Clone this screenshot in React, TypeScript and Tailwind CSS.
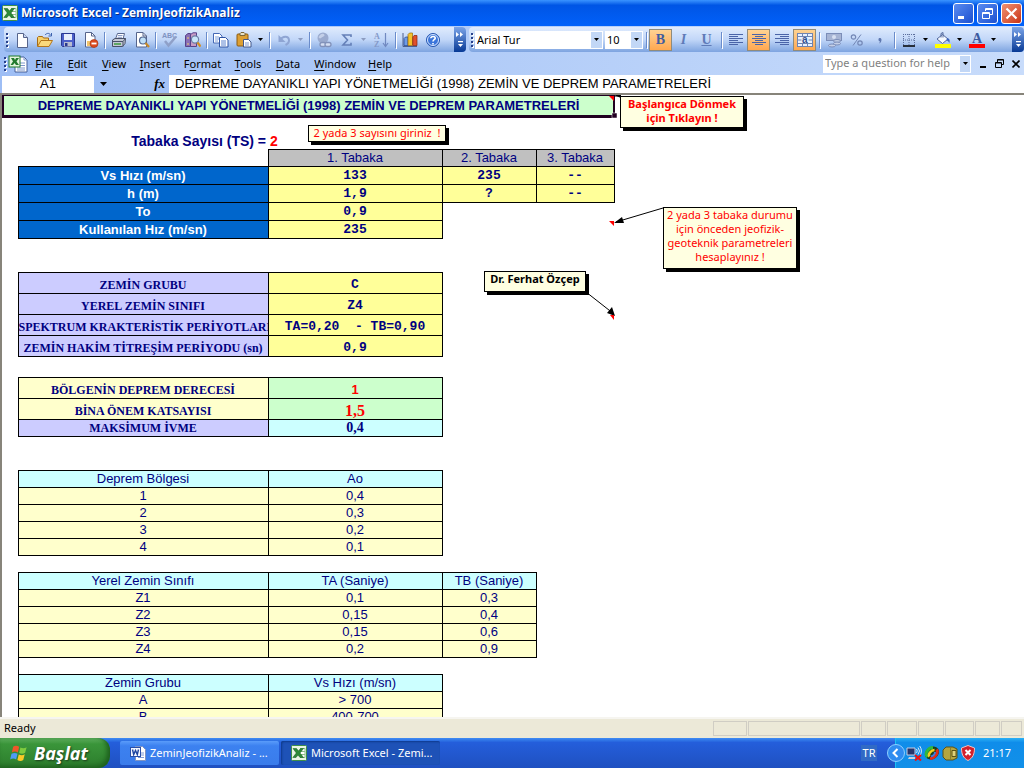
import type { ReactNode } from 'react';

const UI = 'font-["Noto_Sans",sans-serif]';

/* ---------- small drawings ---------- */

function Svg({ children, size = 16 }: { children: ReactNode; size?: number }) {
  return (
    <svg width={size} height={size} viewBox="0 0 16 16" fill="none" aria-hidden="true" className="shrink-0">
      {children}
    </svg>
  );
}

function Caret() {
  return (
    <svg width="5" height="3" viewBox="0 0 5 3" aria-hidden="true" className="shrink-0">
      <path d="M0 0h5L2.5 3z" fill="currentColor" />
    </svg>
  );
}

const ExcelIcon = () => (
  <Svg>
    <rect x=".5" y=".5" width="15" height="15" rx="1" fill="#e9f6e4" stroke="#3f8f48" />
    <path d="M9 3.500h5v9H9" fill="#fff" stroke="#8cc08a" />
    <path d="M10 6.500h4M10 9.500h4" stroke="#8cc08a" />
    <path d="M2 3.500h3.500l2 2.500 2-2.500h3L9 8l3.500 4.500H9L7 10l-2 2.500H1.800L5.300 8z" fill="#2c8a36" stroke="#14561d" strokeWidth=".5" />
  </Svg>
);

const BookIcon = () => (
  <svg width="20" height="18" viewBox="0 0 20 18" aria-hidden="true" className="shrink-0">
    <path d="M7 2h9l3 3v12H7z" fill="#fff" stroke="#47609a" />
    <path d="M16 2v3h3M12 8h5M12 10.500h5M9 13h8M9 15h8" stroke="#7f97cc" fill="none" />
    <rect x="1" y="1" width="11" height="11" fill="#e4f4de" stroke="#1f7a2c" />
    <path d="M3 3h3l1 2 1-2h3L8.500 6.500 11 10H8L6.500 8 5 10H2.500L5 6.500z" fill="#237b2e" />
  </svg>
);

const NewIcon = () => (
  <Svg>
    <path d="M3.500 1.500h6l4 4v10h-10z" fill="#fdfeff" stroke="#56658c" />
    <path d="M9.500 1.500v4h4" fill="#c8d7f2" stroke="#56658c" />
  </Svg>
);
const OpenIcon = () => (
  <Svg>
    <path d="M.5 14V5.500l1-1h4l1 1.500h5v3" fill="#f6d06a" stroke="#a56a14" />
    <path d="M.5 14.500 4 8.500h11.500L12 14.500z" fill="#fbd97c" stroke="#b5761b" />
    <path d="M8 3c2-2.300 4.500-2 5.500 0M14.500 1v3h-3" stroke="#3d62ad" />
  </Svg>
);
const SaveIcon = () => (
  <Svg>
    <path d="M1.500 1.500h13v13h-12l-1-1z" fill="#4c5fc9" stroke="#2a3890" />
    <path d="M4 2h8v6H4z" fill="#e6edfb" />
    <path d="M4 10h8v4.500H4z" fill="#b9bdd0" />
    <path d="M5 11h2.500v3H5z" fill="#2a3890" />
  </Svg>
);
const PermissionIcon = () => (
  <Svg>
    <path d="M2.500 .5h6l3.500 3.500v11h-9.500z" fill="#fff" stroke="#56658c" />
    <path d="M8.500 .5v3.500h3.500" stroke="#56658c" />
    <path d="M4 9h5v5H4z" fill="#f0c46c" />
    <circle cx="11" cy="11.500" r="4" fill="#dc4a1e" stroke="#a8300c" strokeWidth=".6" />
    <path d="M8.500 11.500h5" stroke="#fff" strokeWidth="1.800" />
  </Svg>
);
const PrintIcon = () => (
  <Svg>
    <path d="M4.500 7 6.500 1.500h7L12 7" fill="#fff" stroke="#56658c" />
    <path d="M7 3.500h4.500M6.500 5.300H11" stroke="#8a9cc6" />
    <path d="M1.500 8 4 6.500h10.500l-.5 5-2.500 3H1.500z" fill="#c3c8d4" stroke="#475068" />
    <path d="M1.500 9.500h10.500l2.500-3M12 9.500v5" stroke="#475068" />
    <path d="M3 12h7" stroke="#3c9b3f" strokeWidth="1.500" />
  </Svg>
);
const PreviewIcon = () => (
  <Svg>
    <path d="M2.500 .5h6.500l3.500 3.500v11h-10z" fill="#fff" stroke="#56658c" />
    <path d="M9 .5v3.500h3.500" stroke="#56658c" />
    <circle cx="9" cy="8.500" r="3.500" fill="#bfe0f8" stroke="#51658f" strokeWidth="1.200" />
    <path d="m11.500 11 3.500 4" stroke="#c78a28" strokeWidth="2.200" />
  </Svg>
);
const SpellIcon = () => (
  <svg width="18" height="18" viewBox="0 0 18 18" fill="none" aria-hidden="true" className="shrink-0">
    <text x="1" y="7" fontSize="7" fontWeight="700" fill="#7f93c2" fontFamily="Liberation Sans">ABC</text>
    <path d="m4 10 3.500 4.500L15 5.500" stroke="#8fa0c8" strokeWidth="2.500" />
  </svg>
);
const ResearchIcon = () => (
  <Svg>
    <path d="M.5 3.500 3 1.500h2.500v13h-5z" fill="#8a6fb5" stroke="#574189" />
    <path d="M5.500 2.500 8 .8h3.500v13.700h-6z" fill="#c79bc5" stroke="#574189" />
    <path d="M2 6h2M7 5h3M2 12h2" stroke="#f1d06b" />
    <circle cx="10" cy="7.500" r="3.600" fill="#c9e6fa" stroke="#6e7fa6" strokeWidth="1.200" />
    <path d="m12.500 10.500 3 4" stroke="#d58f20" strokeWidth="2.200" />
  </Svg>
);
const CopyIcon = () => (
  <Svg>
    <path d="M.5 1.500h6l2.500 2.500v7h-8.500z" fill="#fff" stroke="#4468b5" />
    <path d="M2 5h4M2 7h4M2 9h3" stroke="#7fa0dc" />
    <path d="M6.500 5.500h6l2.500 2.500v7h-8.500z" fill="#fff" stroke="#2f54a5" />
    <path d="M8 9h5M8 11h5M8 13h5" stroke="#5c84cf" />
  </Svg>
);
const PasteIcon = () => (
  <Svg>
    <rect x="1" y="2" width="11" height="12" rx="1" fill="#dd9f32" stroke="#8c5a10" />
    <path d="M4 3.500h5V1.500l-1-1H5l-1 1z" fill="#e8e1c8" stroke="#7b6636" />
    <path d="M7.500 7.500h5l2.500 2.500v5h-7.500z" fill="#fff" stroke="#41578c" />
    <path d="M9 11h4M9 13h4" stroke="#7f97cc" />
  </Svg>
);
const UndoIcon = () => (
  <Svg>
    <path d="M4 8c3-4.500 8.500-4 9 0 .2 2.500-1.500 4-3.500 5" stroke="#8fa5d3" strokeWidth="2" />
    <path d="M2.500 3v7H9.500z" fill="#8fa5d3" />
  </Svg>
);
const LinkIcon = () => (
  <Svg>
    <circle cx="7" cy="6" r="5.500" fill="#9aaace" />
    <path d="M4 3c2-2 4-1 4.500 0S6 5 5 6s-2 0-2.500-1" fill="#c3cfe8" />
    <rect x="4" y="10.500" width="6" height="4" rx="2" fill="#d5dff3" stroke="#8292ba" strokeWidth="1.300" />
    <rect x="9" y="10.500" width="6" height="4" rx="2" fill="#d5dff3" stroke="#8292ba" strokeWidth="1.300" />
  </Svg>
);
const SumIcon = () => (
  <Svg>
    <path d="M12 5V3H4l4.500 5L4 13h8v-2.200" stroke="#6580b8" strokeWidth="1.600" />
  </Svg>
);
const SortIcon = () => (
  <Svg>
    <text x="1" y="7" fontSize="8" fontWeight="700" fill="#8499c8" fontFamily="Liberation Serif">A</text>
    <text x="1" y="15" fontSize="8" fontWeight="700" fill="#8499c8" fontFamily="Liberation Serif">Z</text>
    <path d="M12.500 1v13M10 11l2.500 3.500L15 11" stroke="#7189c0" strokeWidth="1.200" />
  </Svg>
);
const ChartIcon = () => (
  <Svg>
    <path d="M1 1v13.500h14" stroke="#4c5e8c" />
    <path d="M2 6.500 3.500 5h2.500v8.500H2z" fill="#6f9be6" stroke="#1d3f8c" strokeWidth=".7" />
    <path d="M6 2.500 7.500 1h3v12.500H6z" fill="#f4c22c" stroke="#996b06" strokeWidth=".7" />
    <path d="M10.800 5 12 3.500h3v10h-4.200z" fill="#e0502c" stroke="#8c220a" strokeWidth=".7" />
  </Svg>
);
const HelpIcon = () => (
  <Svg>
    <circle cx="8" cy="8" r="6.500" fill="#3b75da" stroke="#2857b0" />
    <circle cx="8" cy="8" r="5.500" stroke="#d6e5fd" />
    <path d="M5.800 6.300C6 3.800 10.500 4 10.200 6.300 10 7.700 8 7.800 8 9.500M8 11v1.500" stroke="#fff" strokeWidth="1.600" />
  </Svg>
);
const AlignIcon = ({ ends }: { ends: number[][] }) => (
  <Svg>
    {ends.map(([a, b], i) => (
      <path key={i} d={`M${a} ${2.5 + i * 2}H${b}`} stroke="#4a64a8" />
    ))}
  </Svg>
);
const MergeIcon = () => (
  <Svg>
    <rect x=".5" y="1.500" width="15" height="13" fill="#e9f1fe" stroke="#7085b3" />
    <path d="M.5 4.500h15M.5 11.500h15M5.500 1.500v3M10.500 1.500v3M5.500 11.500v3M10.500 11.500v3M1 8h3.500M11.500 8H15" stroke="#7085b3" />
    <text x="5" y="10.500" fontSize="10" fontWeight="700" fill="#34508e" fontFamily="Liberation Sans">a</text>
  </Svg>
);
const CurrencyIcon = () => (
  <Svg>
    <rect x=".5" y="1.500" width="15" height="7" fill="#a6b4d4" stroke="#7b8db8" />
    <circle cx="8" cy="5" r="2" fill="#d7e0f2" />
    <ellipse cx="11" cy="9" rx="3.500" ry="1.500" fill="#c4cfe7" stroke="#7b8db8" />
    <ellipse cx="11" cy="11.500" rx="3.500" ry="1.500" fill="#c4cfe7" stroke="#7b8db8" />
    <ellipse cx="6" cy="13.500" rx="3.500" ry="1.500" fill="#c4cfe7" stroke="#7b8db8" />
  </Svg>
);
const PercentIcon = () => (
  <Svg>
    <circle cx="4.500" cy="5" r="2.200" stroke="#7387b5" strokeWidth="1.200" />
    <circle cx="11" cy="11" r="2.200" stroke="#7387b5" strokeWidth="1.200" />
    <path d="m12 2.500-8 11" stroke="#7387b5" />
  </Svg>
);
const CommaIcon = () => (
  <Svg>
    <path d="M6.500 7.500c0-2 3-2 3 .3 0 2-1 3.200-2.500 3.700.8-1 .9-1.700.8-2.300-.8.100-1.300-.5-1.300-1.700z" fill="#5f78b0" />
  </Svg>
);
const BordersIcon = () => (
  <Svg>
    <path d="M2.500 2v11M13.500 2v11M8 2v11M2 2.500h12M2 8h12" stroke="#5d6f9d" strokeDasharray="1 1" />
    <path d="M2 14h12" stroke="#000" strokeWidth="1.500" />
  </Svg>
);
const FillIcon = () => (
  <Svg>
    <path d="m2 7 5.500-4.500L13 7l-5.500 4.500z" fill="#f4f8ff" stroke="#52689c" />
    <path d="M6 5.500V1.500l2-1v5" stroke="#52689c" />
    <path d="M12 6c3 .5 3 3 2.300 5-.8-1.500-1.300-2.500-2.800-2.500z" fill="#3d64b8" />
    <path d="M0 12h16v4H0z" fill="#ffff00" />
  </Svg>
);
const FontColorIcon = () => (
  <Svg>
    <text x="3" y="11" fontSize="14" fontWeight="700" fill="#3d5a9f" fontFamily="Liberation Serif">A</text>
    <path d="M0 12h16v4H0z" fill="#ff0000" />
  </Svg>
);
const WordIcon = () => (
  <Svg>
    <path d="M5.500 1.500h7l3 3v11h-10z" fill="#fff" stroke="#8093c0" />
    <path d="M11 8h3M11 10h3M8 12.500h6" stroke="#7d98d6" />
    <rect x=".5" y="2.500" width="10" height="9" fill="#f2f6ff" stroke="#2a4fa8" />
    <path d="m2.500 4.500 1.200 5L5.500 5.500l1.800 4 1.200-5" stroke="#1f45a0" strokeWidth="1.400" />
  </Svg>
);
const WindowsFlag = () => (
  <Svg size={20}>
    <path d="M2.500 3C4 2 5.500 2 7.300 3l-1 4.500C4.700 6.600 3.200 6.600 1.500 7.500z" fill="#f0562a" />
    <path d="M8.300 3.500c1.700.9 3.300.9 5-.2l-1.200 4.500c-1.600 1-3.200 1-4.800.1z" fill="#7fcb3f" />
    <path d="M1.200 8.600c1.700-.9 3.200-.9 4.800 0l-1.100 4.500c-1.600-.9-3.200-.8-4.800.1z" fill="#4f9bf5" />
    <path d="M7 9.100c1.700.9 3.200.9 4.800-.1l-1.200 4.600c-1.500 1-3.100.9-4.700 0z" fill="#fbc927" />
  </Svg>
);

/* ---------- toolbars ---------- */

function ToolButton({ label, active, children }: { label: string; active?: boolean; children: ReactNode }) {
  return (
    <button
      type="button"
      aria-label={label}
      className={
        active
          ? 'flex h-[22px] w-[23px] shrink-0 items-center justify-center border border-[#8f8b7c] bg-linear-to-b from-[#fdd292] to-[#ffa850]'
          : 'flex h-[22px] w-[23px] shrink-0 items-center justify-center'
      }
    >
      {children}
    </button>
  );
}
function DropButton({ label, dim }: { label: string; dim?: boolean }) {
  return (
    <button
      type="button"
      aria-label={label}
      className={dim ? 'flex h-[22px] w-[11px] shrink-0 items-center justify-center text-[#8c9cc0]' : 'flex h-[22px] w-[11px] shrink-0 items-center justify-center text-black'}
    >
      <Caret />
    </button>
  );
}
const Sep = ({ wide }: { wide?: boolean }) => (
  <span className={wide ? 'mr-[2px] ml-[3px] h-4 w-px shrink-0 bg-[#6a8ccb] shadow-[1px_1px_0_#fff]' : 'mx-[2px] h-4 w-px shrink-0 bg-[#6a8ccb] shadow-[1px_1px_0_#fff]'} />
);
const Grip = () => (
  <span className="mx-[2px] flex shrink-0 flex-col gap-[2px]">
    {[0, 1, 2, 3].map((i) => (
      <span key={i} className="size-[2px] bg-[#27418c] shadow-[1px_1px_0_#fff]" />
    ))}
  </span>
);
const Overflow = () => (
  <button type="button" aria-label="Toolbar options" className="ml-auto flex h-full w-3 shrink-0 flex-col items-center justify-between rounded-r-sm bg-linear-to-b from-[#7ba4e8] to-[#053995] py-[5px] text-white">
    <svg width="8" height="5" viewBox="0 0 8 5" aria-hidden="true"><path d="M0 0l3 2.500L0 5zM4 0l3 2.500L4 5z" fill="#fff" /></svg>
    <svg width="7" height="6" viewBox="0 0 7 6" aria-hidden="true"><path d="M1 0h5v1.300H1zM1 3h5L3.500 6z" fill="#fff" /></svg>
  </button>
);
const barClass = 'flex h-[25px] items-center rounded-sm bg-linear-to-b from-[#e0ebfd] via-[#c2d7f8] to-[#7ea4e0]';

function Combo({ label, value, wide }: { label: string; value: string; wide?: boolean }) {
  return (
    <span className={wide ? 'relative flex h-[18px] w-[128px] shrink-0 bg-white' : 'relative ml-[2px] flex h-[18px] w-[38px] shrink-0 bg-white'}>
      <select aria-label={label} defaultValue={value} className="w-full appearance-none pl-[2px] text-[11px] leading-[18px]">
        <option>{value}</option>
      </select>
      <span className="pointer-events-none absolute inset-y-px right-px flex w-[11px] items-center justify-center bg-[#c2d7f6]">
        <Caret />
      </span>
    </span>
  );
}

function Toolbars() {
  return (
    <div className="flex gap-[3px] pt-px pl-1">
      <div className={`${barClass} w-[462px] shrink-0`}>
        <Grip />
        <ToolButton label="New"><NewIcon /></ToolButton>
        <ToolButton label="Open"><OpenIcon /></ToolButton>
        <ToolButton label="Save"><SaveIcon /></ToolButton>
        <ToolButton label="Permission"><PermissionIcon /></ToolButton>
        <Sep />
        <ToolButton label="Print"><PrintIcon /></ToolButton>
        <ToolButton label="Print Preview"><PreviewIcon /></ToolButton>
        <Sep />
        <ToolButton label="Spelling"><SpellIcon /></ToolButton>
        <ToolButton label="Research"><ResearchIcon /></ToolButton>
        <Sep />
        <ToolButton label="Copy"><CopyIcon /></ToolButton>
        <ToolButton label="Paste"><PasteIcon /></ToolButton>
        <DropButton label="Paste options" />
        <Sep wide />
        <ToolButton label="Undo"><UndoIcon /></ToolButton>
        <DropButton label="Undo list" dim />
        <Sep wide />
        <ToolButton label="Hyperlink"><LinkIcon /></ToolButton>
        <ToolButton label="AutoSum"><SumIcon /></ToolButton>
        <DropButton label="AutoSum list" dim />
        <ToolButton label="Sort"><SortIcon /></ToolButton>
        <Sep wide />
        <ToolButton label="Chart Wizard"><ChartIcon /></ToolButton>
        <ToolButton label="Help"><HelpIcon /></ToolButton>
        <Overflow />
      </div>
      <div className={`${barClass} min-w-0 flex-1`}>
        <Grip />
        <Combo label="Font" value="Arial Tur" wide />
        <Combo label="Font size" value="10" />
        <Sep wide />
        <ToolButton label="Bold" active><b className='font-["Liberation_Serif",serif] text-sm text-[#3f5c9f]'>B</b></ToolButton>
        <ToolButton label="Italic"><i className='font-["Liberation_Serif",serif] text-sm font-bold text-[#5f7bb8]'>I</i></ToolButton>
        <ToolButton label="Underline"><u className='font-["Liberation_Serif",serif] text-sm font-bold text-[#5f7bb8]'>U</u></ToolButton>
        <Sep wide />
        <ToolButton label="Align Left"><AlignIcon ends={[[1, 15], [1, 10], [1, 15], [1, 10], [1, 15], [1, 10]]} /></ToolButton>
        <ToolButton label="Center" active><AlignIcon ends={[[1, 15], [4, 12], [1, 15], [4, 12], [1, 15], [4, 12]]} /></ToolButton>
        <ToolButton label="Align Right"><AlignIcon ends={[[1, 15], [6, 15], [1, 15], [6, 15], [1, 15], [6, 15]]} /></ToolButton>
        <ToolButton label="Merge and Center" active><MergeIcon /></ToolButton>
        <Sep wide />
        <ToolButton label="Currency"><CurrencyIcon /></ToolButton>
        <ToolButton label="Percent"><PercentIcon /></ToolButton>
        <ToolButton label="Comma"><CommaIcon /></ToolButton>
        <Sep wide />
        <ToolButton label="Borders"><BordersIcon /></ToolButton>
        <DropButton label="Border styles" />
        <ToolButton label="Fill Color"><FillIcon /></ToolButton>
        <DropButton label="Fill colors" />
        <ToolButton label="Font Color"><FontColorIcon /></ToolButton>
        <DropButton label="Font colors" />
        <Overflow />
      </div>
    </div>
  );
}

/* ---------- menu and formula bars ---------- */

const menus: [string, string, string, string][] = [
  ['', 'F', 'ile', 'w-8'],
  ['', 'E', 'dit', 'w-[35px]'],
  ['', 'V', 'iew', 'w-[38px]'],
  ['', 'I', 'nsert', 'w-[44px]'],
  ['F', 'o', 'rmat', 'w-[51px]'],
  ['', 'T', 'ools', 'w-10'],
  ['', 'D', 'ata', 'w-10'],
  ['', 'W', 'indow', 'w-[54px]'],
  ['', 'H', 'elp', 'w-9'],
];

function MenuBar() {
  return (
    <div className="flex h-[23px] items-center pl-[2px]">
      <Grip />
      <BookIcon />
      <nav className="flex">
        {menus.map(([a, u, b, w]) => (
          <button key={u + b} type="button" className={`${w} text-center text-[11px] leading-4`}>
            {a}
            <span className="underline underline-offset-2">{u}</span>
            {b}
          </button>
        ))}
      </nav>
      <div className="ml-auto flex h-[18px] w-[148px] shrink-0 bg-white">
        <input aria-label="Type a question for help" placeholder="Type a question for help" className="min-w-0 flex-1 pl-[2px] text-[11px] placeholder:text-[#7f7f7f]" />
        <span className="m-px flex w-[10px] items-center justify-center bg-[#c2d7f6]"><Caret /></span>
      </div>
      <div className="flex w-[53px] shrink-0 items-center justify-around pl-1">
        <button type="button" aria-label="Minimize workbook"><svg width="8" height="8" viewBox="0 0 8 8"><path d="M1 6h6v2H1z" /></svg></button>
        <button type="button" aria-label="Restore workbook"><svg width="9" height="9" viewBox="0 0 9 9" fill="none" stroke="#000"><path d="M2.500 3V.5h6v5H6.500M2.500 1h6M.5 3.500h6v5h-6zM.5 4h6" /></svg></button>
        <button type="button" aria-label="Close workbook"><svg width="8" height="8" viewBox="0 0 8 8" stroke="#000" strokeWidth="1.600"><path d="m.5.5 7 7M7.500.5l-7 7" /></svg></button>
      </div>
    </div>
  );
}

const TITLE = 'DEPREME DAYANIKLI YAPI YÖNETMELİĞİ (1998) ZEMİN VE DEPREM PARAMETRELERİ';

function FormulaBar() {
  return (
    <div className='flex h-[18px] items-center pl-[2px] font-["Liberation_Sans",sans-serif] text-[13px]'>
      <input aria-label="Name box" defaultValue="A1" className="h-[17px] w-[92px] bg-white text-center" />
      <button type="button" aria-label="Names" className="flex w-[18px] items-center justify-center">
        <svg width="7" height="4" viewBox="0 0 7 4" aria-hidden="true"><path d="M0 0h7L3.500 4z" /></svg>
      </button>
      <button type="button" aria-label="Insert function" className='ml-auto w-[42px] pr-1 text-right font-["Liberation_Serif",serif] text-[13px] leading-4 font-bold italic'>fx</button>
      <input aria-label="Formula" defaultValue={TITLE} className="h-[18px] w-[calc(100%-167px)] bg-white pl-[6px]" />
    </div>
  );
}

/* ---------- worksheet ---------- */

const blue = 'border border-black bg-[#0066cc] text-white font-bold';
const grey = 'border border-black bg-[#c0c0c0]';
const mono = 'border border-black bg-[#ffff99] font-["Liberation_Mono",monospace] font-bold whitespace-pre';
const lilac = 'border border-black bg-[#ccccff] font-["Liberation_Serif",serif] text-[12px] font-bold whitespace-nowrap overflow-hidden';
const cream = 'border border-black bg-[#ffffcc]';
const serifCream = 'border border-black bg-[#ffffcc] font-["Liberation_Serif",serif] text-[12px] font-bold';
const teal = 'border border-black bg-[#ccffff]';

type Cell = [string, string];
interface Row { h: 17 | 18 | 21; cells?: Cell[] }

const gap: Row = { h: 17 };
const list = (head: string[], body: string[][]): Row[] => [
  { h: 17, cells: head.map((t): Cell => [t, teal]) },
  ...body.map((r): Row => ({ h: 17, cells: r.map((t): Cell => [t, cream]) })),
];

const rows: Row[] = [
  { h: 17, cells: [['', ''], ['1. Tabaka', grey], ['2. Tabaka', grey], ['3. Tabaka', grey]] },
  { h: 18, cells: [['Vs Hızı (m/sn)', blue], ['133', mono], ['235', mono], ['--', mono]] },
  { h: 18, cells: [['h (m)', blue], ['1,9', mono], ['?', mono], ['--', mono]] },
  { h: 18, cells: [['To', blue], ['0,9', mono]] },
  { h: 18, cells: [['Kullanılan Hız (m/sn)', blue], ['235', mono]] },
  gap,
  gap,
  { h: 21, cells: [['ZEMİN GRUBU', lilac], ['C', mono]] },
  { h: 21, cells: [['YEREL ZEMİN SINIFI', lilac], ['Z4', mono]] },
  { h: 21, cells: [['SPEKTRUM KRAKTERİSTİK PERİYOTLARI', lilac], ['TA=0,20  - TB=0,90', mono]] },
  { h: 21, cells: [['ZEMİN HAKİM TİTREŞİM PERİYODU (sn)', lilac], ['0,9', mono]] },
  { h: 21 },
  { h: 21, cells: [['BÖLGENİN DEPREM DERECESİ', serifCream], ['1', 'border border-black bg-[#ccffcc] font-bold text-[#ff0000]']] },
  { h: 21, cells: [['BİNA ÖNEM KATSAYISI', serifCream], ['1,5', 'border border-black bg-[#ccffcc] font-["Liberation_Serif",serif] text-[16px] font-bold text-[#ff0000]']] },
  { h: 17, cells: [['MAKSİMUM İVME', lilac], ['0,4', 'border border-black bg-[#ccffff] font-["Liberation_Serif",serif] text-[14px] font-bold']] },
  gap,
  gap,
  ...list(['Deprem Bölgesi', 'Ao'], [['1', '0,4'], ['2', '0,3'], ['3', '0,2'], ['4', '0,1']]),
  gap,
  ...list(['Yerel Zemin Sınıfı', 'TA (Saniye)', 'TB (Saniye)'], [['Z1', '0,1', '0,3'], ['Z2', '0,15', '0,4'], ['Z3', '0,15', '0,6'], ['Z4', '0,2', '0,9']]),
  { h: 17, cells: [['', 'border-l border-black']] },
  ...list(['Zemin Grubu', 'Vs Hızı (m/sn)'], [['A', '> 700'], ['B', '400-700']]),
];

const rowHeight = { 17: 'h-[17px]', 18: 'h-[18px]', 21: 'h-[21px]' };

function Note({ place, children }: { place: string; children: ReactNode }) {
  return (
    <div className={`absolute border border-black bg-[#ffffe1] text-center text-[11px] leading-[14px] shadow-[3px_3px_0_#000] ${place}`}>
      {children}
    </div>
  );
}

function Sheet() {
  return (
    <main className='relative min-h-0 flex-1 overflow-hidden border-t-2 border-l-2 border-[#87847a] bg-white font-["Liberation_Sans",sans-serif] text-[13px] text-[#000080]'>
      <table className="w-[612px] table-fixed border-collapse text-center leading-4">
        <colgroup>
          <col className="w-[15px]" />
          <col className="w-[250px]" />
          <col className="w-[174px]" />
          <col className="w-[94px]" />
          <col className="w-[78px]" />
        </colgroup>
        <tbody>
          <tr className="h-[21px]">
            <th colSpan={5} className="border-x-2 border-t border-b-3 border-[#210021] bg-[#ccffcc] p-0 text-[13px] font-bold">{TITLE}</th>
          </tr>
          <tr className="h-4"><td colSpan={5} className="p-0" /></tr>
          <tr className="h-[17px]">
            <td className="p-0" />
            <td className="p-0 pr-[2px] text-right text-[14px] font-bold">Tabaka Sayısı (TS) =</td>
            <td className="p-0 pl-[2px] text-left text-[14px] font-bold text-[#ff0000]">2</td>
          </tr>
          {rows.map((row, i) => (
            <tr key={i} className={rowHeight[row.h]}>
              <td className="p-0" />
              {row.cells?.map(([text, look], j) => (
                <td key={j} className={`p-0 align-bottom ${look}`}>{text}</td>
              ))}
            </tr>
          ))}
        </tbody>
      </table>

      <svg width="680" height="240" viewBox="0 0 680 240" className="absolute top-0 left-0" aria-hidden="true">
        <path d="M661 113 614 127M584 197 612 219M613 1h6" stroke="#000" />
        <path d="M612 128l8-6 2 6zM613 221l-8-3 5-6zM612 0h7v3z" fill="#000" />
        <path d="M607 1h5v5zM607 126h5v5zM608 220h4v5z" fill="#ff0000" />
        <path d="M610 18h5v5h-5z" fill="#210021" stroke="#fff" strokeWidth=".5" />
      </svg>
      <Note place="top-px left-[618px] h-8 w-[124px] font-bold text-[#ff0000]">
        <a href="#baslangic" className={UI}>Başlangıca Dönmek<br />için Tıklayın !</a>
      </Note>
      <Note place="top-[30px] left-[306px] h-[17px] w-[138px] text-[#ff0000]"><span className={UI}>2 yada 3 sayısını giriniz&nbsp; !</span></Note>
      <Note place="top-[112px] left-[661px] h-[62px] w-[134px] text-[#ff0000]">
        <span className={UI}>2 yada 3 tabaka durumu<br />için önceden jeofizik-<br />geoteknik parametreleri<br />hesaplayınız !</span>
      </Note>
      <Note place="top-[176px] left-[482px] h-[21px] w-[102px] font-bold text-black"><span className={UI}>Dr. Ferhat Özçep</span></Note>
    </main>
  );
}

/* ---------- frame ---------- */

function TitleBar() {
  const btn = 'flex size-[21px] items-center justify-center rounded-[3px] border border-white';
  return (
    <header className="flex h-[26px] shrink-0 items-center gap-[3px] bg-linear-to-b from-[#3a93ff] via-[#0055e5] via-20% to-[#0161fa] pr-[2px] pl-[2px] text-white">
      <ExcelIcon />
      <h1 className='flex-1 font-["Open_Sans",sans-serif] text-[12px] font-bold [text-shadow:1px_1px_0_#0a2a80]'>Microsoft Excel - ZeminJeofizikAnaliz</h1>
      <button type="button" aria-label="Minimize" className={`${btn} bg-linear-to-br from-[#5a8bf0] to-[#1c4fd0]`}>
        <svg width="13" height="13" viewBox="0 0 13 13"><path d="M1 9h6v3H1z" fill="#fff" /></svg>
      </button>
      <button type="button" aria-label="Restore" className={`${btn} bg-linear-to-br from-[#5a8bf0] to-[#1c4fd0]`}>
        <svg width="13" height="13" viewBox="0 0 13 13" fill="none" stroke="#fff"><path d="M4.500 4V1.500h7v6H9M4.500 2.500h7M1.500 5.500h7v6h-7zM1.500 6.500h7" /></svg>
      </button>
      <button type="button" aria-label="Close" className={`${btn} bg-linear-to-br from-[#f09070] to-[#c83010]`}>
        <svg width="13" height="13" viewBox="0 0 13 13" stroke="#fff" strokeWidth="2.200"><path d="m1.500 1.500 10 10M11.500 1.500l-10 10" /></svg>
      </button>
    </header>
  );
}

function StatusBar() {
  const box = 'h-[15px] border border-[#d0cdc4]';
  return (
    <div className="flex h-[21px] shrink-0 items-center border-t-2 border-[#f6f5f0] bg-[#ece9d8] pr-[2px] pl-1 text-[11px]">
      <span className="flex-1">Ready</span>
      <span className="flex gap-px">
        <span className={`${box} w-[34px]`} />
        <span className={`${box} w-[112px]`} />
        <span className={`${box} w-[25px]`} />
        <span className={`${box} w-[30px]`} />
        <span className={`${box} w-[26px]`} />
        <span className={`${box} w-[29px]`} />
        <span className={`${box} w-[25px]`} />
        <span className={`${box} w-[21px]`} />
      </span>
    </div>
  );
}

function Taskbar() {
  return (
    <footer className="flex h-[30px] shrink-0 items-center bg-linear-to-b from-[#3f8cf3] via-[#245edb] via-15% to-[#1f50c0] text-[11px] text-white">
      <button type="button" className='mr-[10px] flex h-full w-[110px] items-center gap-1 rounded-r-xl bg-linear-to-b from-[#5eb05e] via-[#3a953a] via-20% to-[#2c7d2c] pl-[10px] font-["Open_Sans",sans-serif] text-lg font-bold italic shadow-[inset_-3px_-2px_5px_#1d5f1d] [text-shadow:1px_1px_2px_#1a3a1a]'>
        <WindowsFlag />
        Başlat
      </button>
      <button type="button" className="mr-[2px] flex h-6 w-[159px] items-center gap-1 rounded-xs bg-linear-to-b from-[#5a9cfa] via-[#3c81f0] via-20% to-[#3a7ceb] pl-[10px]">
        <WordIcon />
        ZeminJeofizikAnaliz - ...
      </button>
      <button type="button" className="flex h-6 w-[159px] items-center gap-1 rounded-xs bg-[#1e52b7] pl-[10px] shadow-[inset_1px_1px_2px_#0e3a8c]">
        <ExcelIcon />
        Microsoft Excel - Zemi...
      </button>
      <span className="mr-[18px] ml-auto flex h-4 w-4 items-center justify-center bg-[#316ac5]">TR</span>
      <div className="flex h-full w-[129px] shrink-0 items-center border-l border-[#19c4f4] bg-linear-to-b from-[#2bb0f5] via-[#0f8dea] via-15% to-[#1290e8]">
        <button type="button" aria-label="Show hidden icons" className="-ml-[9px] shrink-0">
          <svg width="18" height="18" viewBox="0 0 18 18"><circle cx="9" cy="9" r="8.500" fill="#2f8cf0" stroke="#8fd0ff" /><path d="M10.500 5 6.500 9l4 4" fill="none" stroke="#fff" strokeWidth="2" /></svg>
        </button>
        <span className="ml-px flex gap-[2px]">
          <Svg>
            <path d="M1 3h8v7H1z" fill="#27356b" stroke="#c4cde4" />
            <path d="M3 12h6v2H2z" fill="#c9d0dd" />
            <path d="M10.500 4q1.500 2 0 4M12 2.500q3 3.500 0 7M13.700 1q3.500 5 0 10" stroke="#d6e8fb" />
            <path d="m9 10 6 5.500M15 10l-6 5.500" stroke="#f01010" strokeWidth="2" />
          </Svg>
          <Svg>
            <ellipse cx="8" cy="8" rx="7.500" ry="6" transform="rotate(-35 8 8)" fill="#1c3f1c" />
            <path d="M3.500 12C0 9 4 2.500 9 2.500" stroke="#2fb83f" strokeWidth="3" />
            <path d="M12.500 4.500c2.500 3-2 9-6.500 9" stroke="#e02a1a" strokeWidth="3" />
            <path d="M5.500 11.500C3.500 9.500 7 5 10.500 5" stroke="#f3d21c" strokeWidth="2.500" />
            <path d="M11 7c0 2-2 4-4 4.500" stroke="#3c7de0" strokeWidth="2" />
          </Svg>
          <Svg>
            <path d="M1 5 4 2h7l4 2v9l-4 2H4l-3-3z" fill="#b4a53f" stroke="#5c5317" />
            <path d="M8.500 3v11" stroke="#8a7d2c" />
            <path d="M10 5.500h4v6h-4z" fill="#e0d27a" stroke="#5c5317" />
          </Svg>
          <Svg>
            <path d="M8 .5 14.500 3c0 6-1.500 10-6.500 12.500C3 13 1.500 9 1.500 3z" fill="#d3202c" stroke="#f3c0c0" />
            <path d="m5.500 5 5 5M10.500 5l-5 5" stroke="#fff" strokeWidth="2" />
          </Svg>
        </span>
        <time className="ml-[7px]">21:17</time>
      </div>
    </footer>
  );
}

export default function App() {
  return (
    <div className={`flex h-screen flex-col overflow-hidden text-black ${UI}`}>
      <TitleBar />
      <div className="shrink-0 bg-linear-to-r from-[#9ebef5] to-[#c8dcfb]">
        <Toolbars />
        <MenuBar />
        <FormulaBar />
      </div>
      <Sheet />
      <StatusBar />
      <Taskbar />
    </div>
  );
}
